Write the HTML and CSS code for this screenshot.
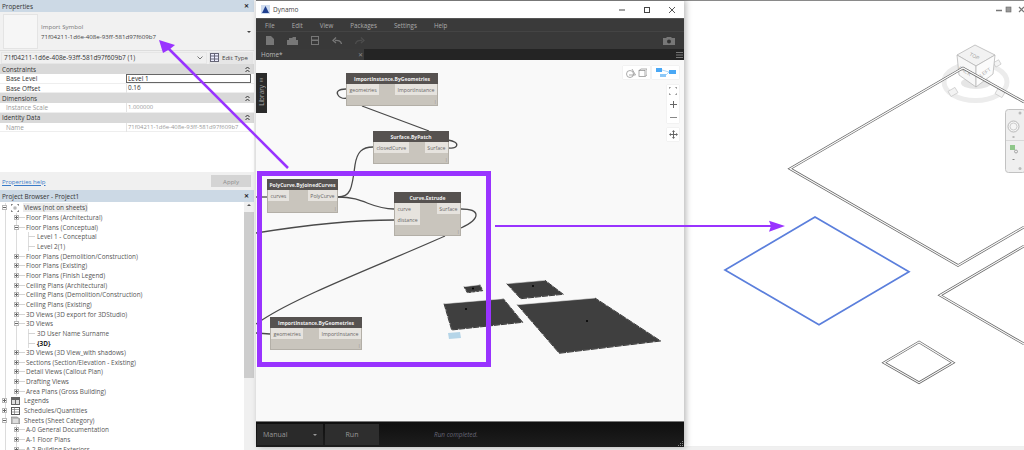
FILE: index.html
```html
<!DOCTYPE html>
<html lang="en">
<head>
<meta charset="utf-8">
<title>Dynamo in Revit</title>
<link rel="stylesheet" href="styles.css">
</head>
<body>
<div class="page">
  <aside class="side">
    <div class="panel-title"><span>Properties</span><span class="x">✕</span></div>
    <div class="selector">
      <div class="thumb"></div>
      <div class="sel-text"><div class="muted">Import Symbol</div><div>71f04211-1d6e-408e-93ff-581d97f609b7</div></div>
      <span class="caret"></span>
    </div>
    <div class="type-row">
      <div class="combo"><span>71f04211-1d6e-408e-93ff-581d97f609b7 (1)</span>
        <svg class="chev" width="6" height="4" viewBox="0 0 6 4"><path d="M0.5 .5 3 3 5.5 .5" fill="none" stroke="#777"/></svg>
      </div>
      <div class="edit-type">
        <svg width="9" height="9" viewBox="0 0 9 9"><rect x=".5" y=".5" width="8" height="8" fill="#eef" stroke="#667"/><path d="M4.500 .5V8.500M.5 3H8.500M.5 6H8.500" stroke="#667" fill="none"/></svg>
        <span>Edit Type</span>
      </div>
    </div>
    <div class="sec"><span>Constraints</span><svg class="sec-ic" width="5" height="7" viewBox="0 0 5 7"><path d="M.5 3 2.500 1 4.500 3M.5 6 2.500 4 4.500 6" fill="none" stroke="#333"/></svg></div>
    <div class="prop"><span class="pn strong">Base Level</span><span class="pv active">Level 1</span></div>
    <div class="prop"><span class="pn strong">Base Offset</span><span class="pv dark">0.16</span></div>
    <div class="sec"><span>Dimensions</span><svg class="sec-ic" width="5" height="7" viewBox="0 0 5 7"><path d="M.5 3 2.500 1 4.500 3M.5 6 2.500 4 4.500 6" fill="none" stroke="#333"/></svg></div>
    <div class="prop"><span class="pn">Instance Scale</span><span class="pv">1.000000</span></div>
    <div class="sec"><span>Identity Data</span><svg class="sec-ic" width="5" height="7" viewBox="0 0 5 7"><path d="M.5 3 2.500 1 4.500 3M.5 6 2.500 4 4.500 6" fill="none" stroke="#333"/></svg></div>
    <div class="prop"><span class="pn">Name</span><span class="pv">71f04211-1d6e-408e-93ff-581d97f609b7</span></div>
    <div class="prop-space"></div>
    <div class="prop-foot"><a class="help">Properties help</a><span class="apply">Apply</span></div>
    <div class="panel-title"><span>Project Browser - Project1</span><span class="x">✕</span></div>
    <div class="browser">
      <div class="tree">
        <div class="row l0 sub"><i class="exp minus"></i><svg class="ti" width="8" height="8" viewBox="0 0 8 8"><path d="M0 2V0H2M6 0H8V2M8 6V8H6M2 8H0V6" fill="none" stroke="#555"/><rect x="3" y="3" width="2" height="2" fill="none" stroke="#777" stroke-width=".6"/></svg><span class="hl">Views (not on sheets)</span></div>
        <div class="row l1"><i class="exp"></i><b></b>Floor Plans (Architectural)</div>
        <div class="row l1"><i class="exp minus"></i><b></b>Floor Plans (Conceptual)</div>
        <div class="row l2"><b></b>Level 1 - Conceptual</div>
        <div class="row l2"><b></b>Level 2(1)</div>
        <div class="row l1"><i class="exp"></i><b></b>Floor Plans (Demolition/Construction)</div>
        <div class="row l1"><i class="exp"></i><b></b>Floor Plans (Existing)</div>
        <div class="row l1"><i class="exp"></i><b></b>Floor Plans (Finish Legend)</div>
        <div class="row l1"><i class="exp"></i><b></b>Ceiling Plans (Architectural)</div>
        <div class="row l1"><i class="exp"></i><b></b>Ceiling Plans (Demolition/Construction)</div>
        <div class="row l1"><i class="exp"></i><b></b>Ceiling Plans (Existing)</div>
        <div class="row l1"><i class="exp"></i><b></b>3D Views (3D export for 3DStudio)</div>
        <div class="row l1"><i class="exp minus"></i><b></b>3D Views</div>
        <div class="row l2"><b></b>3D User Name Surname</div>
        <div class="row l2"><b></b><strong>{3D}</strong></div>
        <div class="row l1"><i class="exp"></i><b></b>3D Views (3D View_with shadows)</div>
        <div class="row l1"><i class="exp"></i><b></b>Sections (Section/Elevation - Existing)</div>
        <div class="row l1"><i class="exp"></i><b></b>Detail Views (Callout Plan)</div>
        <div class="row l1"><i class="exp"></i><b></b>Drafting Views</div>
        <div class="row l1"><i class="exp"></i><b></b>Area Plans (Gross Building)</div>
        <div class="row l0"><i class="exp"></i><svg class="ti" width="9" height="8" viewBox="0 0 9 8"><rect width="9" height="8" fill="#666"/><path d="M1 3H4V7H1ZM5 3H8V7H5Z" fill="#ddd"/></svg>Legends</div>
        <div class="row l0"><i class="exp"></i><svg class="ti" width="9" height="8" viewBox="0 0 9 8"><rect x=".5" y=".5" width="8" height="7" fill="#fff" stroke="#555"/><path d="M.5 2.500H8.500M.5 5H8.500M3.500 .5V7.500" stroke="#777" fill="none" stroke-width=".7"/></svg>Schedules/Quantities</div>
        <div class="row l0"><i class="exp minus"></i><svg class="ti" width="9" height="8" viewBox="0 0 9 8"><path d="M0 1H6L9 3V8H0Z" fill="#bbb" stroke="#777" stroke-width=".6"/><path d="M2 4H7M2 6H7" stroke="#fff"/></svg>Sheets (Sheet Category)</div>
        <div class="row l1 last"><i class="exp"></i><b></b>A-0 General Documentation</div>
        <div class="row l1 last"><i class="exp"></i><b></b>A-1 Floor Plans</div>
        <div class="row l1 last"><i class="exp"></i><b></b>A-2 Building Exteriors</div>
      </div>
      <div class="scroll"><span class="sc-arrow"></span><span class="sc-thumb"></span></div>
    </div>
  </aside>

  <section class="dyn">
    <div class="dyn-title">
      <svg class="dyn-logo" width="9" height="9" viewBox="0 0 9 9"><rect width="9" height="9" fill="#cfdcef"/><path d="M1 8 4.500 1 8 8Z" fill="#1f3f8f"/></svg>
      <span class="dyn-name">Dynamo</span>
      <span class="win-btns">
        <svg width="6" height="6" viewBox="0 0 6 6"><path d="M0 3H6" stroke="#444"/></svg>
        <svg width="6" height="6" viewBox="0 0 6 6"><rect x=".5" y=".5" width="5" height="5" fill="none" stroke="#444"/></svg>
        <svg width="6" height="6" viewBox="0 0 6 6"><path d="M0 0 6 6M6 0 0 6" stroke="#444" stroke-width=".9"/></svg>
      </span>
    </div>
    <nav class="menu"><span>File</span><span>Edit</span><span>View</span><span>Packages</span><span>Settings</span><span>Help</span></nav>
    <div class="tools">
      <svg width="8" height="9" viewBox="0 0 8 9"><path d="M0 0H5L8 3V9H0Z" fill="#777"/></svg>
      <svg width="11" height="8" viewBox="0 0 11 8"><path d="M0 3H11V8H0ZM2 3V1H5L6 0H9V3" fill="#777"/></svg>
      <svg width="8" height="9" viewBox="0 0 8 9"><path d="M0 0H8V9H0ZM1 1V3.500H7V1ZM1 5V8H7V5Z" fill="#777" fill-rule="evenodd"/></svg>
      <svg width="10" height="7" viewBox="0 0 10 7"><path d="M9.500 7C9 4 6 3 3 3.500M4 .5 1 3.500 4 6" fill="none" stroke="#777" stroke-width="1.300"/></svg>
      <svg width="10" height="7" viewBox="0 0 10 7"><path d="M.5 7C1 4 4 3 7 3.500M6 .5 9 3.500 6 6" fill="none" stroke="#4d4d4d" stroke-width="1.300"/></svg>
      <svg class="camera" width="12" height="8" viewBox="0 0 12 8"><path d="M0 1H3L4 0H8L9 1H12V8H0Z" fill="#777"/><circle cx="6" cy="4.500" r="2" fill="#333"/></svg>
    </div>
    <div class="tabs">
      <div class="tab"><span>Home*</span><span class="tab-x">✕</span></div>
      <svg class="burger" width="7" height="6" viewBox="0 0 7 6"><path d="M0 .5H7M0 3H7M0 5.500H7" stroke="#777"/></svg>
    </div>
    <div class="graph">
      <svg class="wires" width="427" height="361" viewBox="256 60 427 361">
        <g fill="none" stroke="#4a4a4a" stroke-width="1.300">
          <path d="M346 89C338 89 336 92 338 95 340 98 344 99 348 98"/>
          <path d="M362 106 429 131"/>
          <path d="M448 140C454 141 458 143 456.500 146 455 149 452 148 448 148"/>
          <path d="M338 197C350 197 352 190 355 165 357 152 362 147 373 147"/>
          <path d="M338 197C365 197 370 209 394 209"/>
          <path d="M256 233C300 226 350 220 394 220"/>
          <path d="M461 209C480 209 482 218 461 228"/>
          <path d="M445 236C380 265 300 295 262 320L256 324"/>
          <path d="M256 197H267"/>
          <path d="M256 333 270 334"/>
        </g>
        <g stroke="#e8e8e8" stroke-width=".6">
          <polygon points="464,286.700 480,284.700 482.700,290.700 467.300,292.700" fill="#3c3c3c"/>
          <polygon points="506.700,283.700 545,280.300 563.300,294.300 520.700,298.700" fill="#3f3f3f"/>
          <polygon points="444,303.700 503.300,298.700 522.700,322.300 451.700,330" fill="#3f3f3f"/>
          <polygon points="517.300,304.700 595,298 660.700,341 559.300,353.300" fill="#3f3f3f"/>
        </g>
        <g fill="none" stroke="#000" stroke-width=".7">
          <path d="M464 286.700 467.300 292.700 482.700 290.700 480 284.700" stroke-dasharray="3 1"/>
          <path d="M506.700 283.700 520.700 298.700 563.300 294.300 545 280.300" stroke-dasharray="6 1"/>
          <path d="M444 303.700 451.700 330 522.700 322.300 503.300 298.700" stroke-dasharray="6 1"/>
          <path d="M517.300 304.700 559.300 353.300 660.700 341 595 298" stroke-dasharray="7 1"/>
        </g>
        <g fill="#000">
          <circle cx="473" cy="288.500" r="1"/>
          <circle cx="533" cy="286" r="1"/>
          <circle cx="466" cy="309" r="1"/>
          <circle cx="587" cy="321" r="1"/>
        </g>
        <polygon points="448,333 460,332 461,338 449,339" fill="#b5d5e8"/>
      </svg>
      <div class="library"><span class="lib-ic">≡</span><span class="lib-txt">Library</span></div>

      <div class="node n-imp1"><div class="nh">ImportInstance.ByGeometries</div><div class="ports"><div class="col"><span>geometries</span></div><div class="col"><span>ImportInstance</span></div></div><i class="lace">⁞</i></div>
      <div class="node n-patch"><div class="nh">Surface.ByPatch</div><div class="ports"><div class="col"><span>closedCurve</span></div><div class="col"><span>Surface</span></div></div><i class="lace">⁞</i></div>
      <div class="node n-poly"><div class="nh">PolyCurve.ByJoinedCurves</div><div class="ports"><div class="col"><span>curves</span></div><div class="col"><span>PolyCurve</span></div></div><i class="lace">⁞</i></div>
      <div class="node n-ext"><div class="nh">Curve.Extrude</div><div class="ports"><div class="col"><span>curve</span><span>distance</span></div><div class="col"><span>Surface</span></div></div><i class="lace">⁞</i></div>
      <div class="node n-imp2"><div class="nh">ImportInstance.ByGeometries</div><div class="ports"><div class="col"><span>geometries</span></div><div class="col"><span>ImportInstance</span></div></div><i class="lace">⁞</i></div>

      <div class="ctl c-view">
        <svg width="21" height="10" viewBox="0 0 21 10"><g fill="none" stroke="#888" stroke-width=".7"><circle cx="4" cy="6" r="3.500"/><path d="M6 1 9.500 7H3"/><rect x="13" y="2.500" width="6" height="6"/><path d="M13 2.500 15 1H21V7L19 8.500"/></g></svg>
      </div>
      <div class="ctl c-graph">
        <svg width="20" height="10" viewBox="0 0 20 10"><rect x="0" y="0" width="6" height="4" fill="#4aa8f5"/><rect x="13" y="2" width="7" height="4" fill="#4aa8f5"/><rect x="4" y="6" width="6" height="3" fill="#8cc8f8"/><path d="M6 2 13 4M10 7 13 4" stroke="#8cc8f8" fill="none" stroke-width=".7"/></svg>
      </div>
      <div class="ctl c-zoom">
        <svg width="8" height="8" viewBox="0 0 8 8"><path d="M0 2V0H2M6 0H8V2M8 6V8H6M2 8H0V6" fill="none" stroke="#777"/></svg>
        <svg width="7" height="7" viewBox="0 0 7 7"><path d="M3.500 0V7M0 3.500H7" stroke="#666"/></svg>
        <svg width="7" height="7" viewBox="0 0 7 7"><path d="M0 3.500H7" stroke="#888"/></svg>
      </div>
      <div class="ctl c-pan">
        <svg width="9" height="9" viewBox="0 0 9 9"><path d="M4.500 0 6 2H3ZM4.500 9 3 7H6ZM0 4.500 2 3V6ZM9 4.500 7 6V3Z" fill="#666"/><path d="M4.500 1V8M1 4.500H8" stroke="#666"/></svg>
      </div>
    </div>
    <div class="runbar">
      <div class="manual"><span>Manual</span><i class="mcaret"></i></div>
      <div class="runbtn">Run</div>
      <span class="status">Run completed.</span>
      <svg class="grip" width="6" height="6" viewBox="0 0 6 6"><path d="M5 1H6V2H5ZM3 3H4V4H3ZM5 3H6V4H5ZM1 5H2V6H1ZM3 5H4V6H3ZM5 5H6V6H5Z" fill="#888"/></svg>
    </div>
  </section>

  <section class="view3d">
    <svg class="scene" width="340" height="447" viewBox="684 0 340 447">
      <g class="ctrls">
        <path d="M996 9.500H1002" stroke="#777" stroke-width="1.500"/>
        <rect x="1006" y="6" width="5" height="5" fill="#999" stroke="#666" stroke-width=".6"/>
        <path d="M1019 6 1024 11M1024 6 1019 11" stroke="#777" stroke-width="1.200"/>
      </g>
      <ellipse cx="975.500" cy="81" rx="31.500" ry="18.500" fill="none" stroke="#ececec" stroke-width="5"/>
      <g fill="#f3f3f3" stroke="#c8c8c8" stroke-width=".7">
        <rect x="949" y="88" width="8" height="6" transform="rotate(-30 953 91)"/>
        <rect x="996" y="89" width="8" height="6" transform="rotate(30 1000 92)"/>
        <rect x="994" y="60" width="6" height="5" transform="rotate(-30 997 62)"/>
      </g>
      <ellipse cx="976" cy="82" rx="15" ry="6" fill="#e6e6e6"/>
      <g stroke="#b8b8b8" stroke-width=".8" stroke-linejoin="round">
        <polygon points="975,44 995,54 976,65 957,54" fill="#f2f2f2"/>
        <polygon points="957,54 976,65 976,86 959,74" fill="#f7f7f7"/>
        <polygon points="976,65 995,54 993,73 976,86" fill="#fbfbfb"/>
      </g>
      <g class="cube-txt">
        <text x="975" y="57" transform="rotate(28 975 54)" text-anchor="middle">TOP</text>
        <text x="965" y="72" transform="rotate(32 965 70)" text-anchor="middle">BACK</text>
        <text x="985" y="73" transform="rotate(-35 985 71)" text-anchor="middle">LEFT</text>
      </g>

      <g class="dbl">
        <path class="o" d="M1024 101 963 67 790 167.700 958 264.500 1024 226"/>
        <path class="i" d="M1024 101 963 67 790 167.700 958 264.500 1024 226"/>
        <path class="o" d="M1024 245 940 294.300 1024 343"/>
        <path class="i" d="M1024 245 940 294.300 1024 343"/>
        <path class="o" d="M919 341 884 361.700 919 381.700 953 361.700Z"/>
        <path class="i" d="M919 341 884 361.700 919 381.700 953 361.700Z"/>
      </g>
      <polygon class="sel" points="815,216 725,269 819,323.700 909,270.700"/>

      <rect x="1005.500" y="108.500" width="20" height="63" rx="3" fill="#efefef" stroke="#c2c2c2"/>
      <circle cx="1013.500" cy="125.500" r="5.500" fill="#f5f5f5" stroke="#aaa" stroke-width=".8"/>
      <circle cx="1013.500" cy="125.500" r="3.500" fill="none" stroke="#bbb" stroke-width=".7"/>
      <path d="M1006 139.500H1024" stroke="#d8d8d8"/>
      <rect x="1010" y="144" width="5" height="5" fill="#8fc78a"/>
      <circle cx="1016" cy="150.500" r="1.500" fill="none" stroke="#777" stroke-width=".6"/>
      <circle cx="1020" cy="112" r="1.500" fill="#bbb"/>
      <circle cx="1020" cy="167.500" r="1.500" fill="#bbb"/>
      <path d="M1012.500 136H1014.500M1012.500 158.500H1014.500" stroke="#888"/>
    </svg>
  </section>

  <svg class="marks" width="1024" height="450" viewBox="0 0 1024 450">
    <rect class="m-box" x="259.500" y="173.500" width="229" height="191"/>
    <path class="m-line" d="M288 168 168 48"/>
    <polygon class="m-head" points="159,40 175,45 170,49 163,53"/>
    <path class="m-line thin" d="M495 226H772"/>
    <polygon class="m-head" points="769,220.700 785,226 769,231.700 771,226"/>
  </svg>
</div>
</body>
</html>
```
FILE: styles.css
```css
* { box-sizing: border-box; }
html, body { margin: 0; padding: 0; }
body { background: #f0f0f0; font-family: "Open Sans", "Liberation Sans", sans-serif; font-size: 6.4px; color: #444; }
.page { position: relative; display: flex; width: 1024px; height: 450px; overflow: hidden; }

/* left column */
.side { width: 254px; height: 450px; flex: none; display: flex; flex-direction: column; background: #fff; margin-right: 2px; }
.panel-title { flex: none; height: 12px; display: flex; align-items: center; justify-content: space-between; padding: 0 5px 0 2px; background: #ccd9e5; color: #333; }
.x { font-size: 6px; font-weight: 700; color: #222; }
.selector { flex: none; height: 39px; display: flex; align-items: center; background: #f1f1f1; border-bottom: 1px solid #ddd; padding: 1px 3px 1px 3px; position: relative; }
.thumb { width: 35px; height: 35px; background: #f6f6f6; border: 1px solid #e4e4e4; margin-right: 3px; flex: none; }
.sel-text { display: flex; flex-direction: column; gap: 2.500px; color: #444; line-height: 7px; font-size: 6.150px; padding-top: 1px; }
.muted { color: #777; }
.caret { margin-left: auto; width: 0; height: 0; border: 2px solid transparent; border-top: 2px solid #444; margin-top: 4px; }
.type-row { flex: none; height: 13px; display: flex; align-items: center; background: #f0f0f0; padding: 0 1px; gap: 2px; }
.combo { width: 206px; height: 12px; display: flex; align-items: center; justify-content: space-between; padding: 0 2px; background: #f0f0f0; color: #333; border: 1px solid #e6e6e6; font-size: 6.500px; }
.chev { margin-right: 1px; }
.edit-type { flex: 1; height: 12px; display: flex; align-items: center; gap: 3px; padding-left: 1px; background: #e6e6e6; color: #444; font-size: 6.100px; }
.sec { flex: none; height: 10px; display: flex; align-items: center; justify-content: space-between; padding: 0 4px 0 2px; background: #d9d9d9; color: #333; }
.prop { flex: none; height: 9.500px; display: grid; grid-template-columns: 126px 1fr; align-items: center; background: #fff; border-bottom: 1px solid #eee; }
.pn { padding-left: 6px; color: #999; }
.pn.strong { color: #333; }
.pv { height: 100%; padding-left: 1px; color: #999; line-height: 8px; border-left: 1px solid #e4e4e4; font-size: 5.900px; white-space: nowrap; }
.pv.dark { color: #333; font-size: 6.400px; }
.pv.active { color: #222; border: 1px solid #666; margin-right: 3px; line-height: 7px; font-size: 6.400px; }
.prop-space { flex: 1; background: #fff; }
.prop-foot { flex: none; height: 18px; display: flex; align-items: center; justify-content: space-between; padding: 0 3px 0 2px; background: #f0f0f0; font-size: 6.100px; }
.help { color: #3a7bc8; text-decoration: underline; }
.apply { width: 40px; height: 12px; display: flex; align-items: center; justify-content: center; background: #d4d4d4; color: #8d8d8d; }

.browser { flex: none; height: 248px; display: flex; background: #fff; overflow: hidden; }
.tree { flex: 1; padding-top: 1px; }
.row { height: 9.660px; display: flex; align-items: center; white-space: nowrap; color: #555; position: relative; }
.row.l0 { padding-left: 2px; background: linear-gradient(#dcdcdc, #dcdcdc) 5px 0 / 1px 100% no-repeat; }
.row.l1 { padding-left: 14px; background: linear-gradient(#dcdcdc, #dcdcdc) 5px 0 / 1px 100% no-repeat, linear-gradient(#dcdcdc, #dcdcdc) 16px 0 / 1px 100% no-repeat; }
.row.l2 { padding-left: 28px; background: linear-gradient(#dcdcdc, #dcdcdc) 5px 0 / 1px 100% no-repeat, linear-gradient(#dcdcdc, #dcdcdc) 16px 0 / 1px 100% no-repeat, linear-gradient(#dcdcdc, #dcdcdc) 28px 0 / 1px 100% no-repeat; }
.row b { display: block; width: 6px; height: 1px; background: #d4d4d4; margin: 0 1px 0 0; flex: none; }
.row.l2 b { width: 7px; margin: 0 2px 0 0; }
.row.l2 strong { color: #222; font-weight: 700; }
.exp { display: block; flex: none; width: 5px; height: 5px; border: 1px solid #b8b8b8; background: linear-gradient(#666, #666) center / 3px 1px no-repeat, linear-gradient(#666, #666) center / 1px 3px no-repeat, #fff; }
.exp.minus { background: linear-gradient(#666, #666) center / 3px 1px no-repeat, #fff; }
.ti { flex: none; margin: 0 4px 0 4px; }
.hl { background: #ececec; padding: 0 1px; color: #444; }
.scroll { width: 10px; flex: none; background: #f0f0f0; display: flex; flex-direction: column; align-items: center; }
.sc-arrow { width: 0; height: 0; margin: 2px 0 6px; border: 2.500px solid transparent; border-bottom: 2.500px solid #555; border-top-width: 0; }
.sc-thumb { width: 10px; height: 166px; background: #cdcdcd; }

/* Dynamo window */
.dyn { width: 428px; height: 447px; flex: none; display: flex; flex-direction: column; background: #fff; border-top: 1px solid #777; box-shadow: 2px 0 6px rgba(0, 0, 0, .28); z-index: 1; }
.dyn-title { flex: none; height: 17px; display: flex; align-items: center; padding: 0 9px 0 5px; background: #fff; }
.dyn-logo { margin-right: 3px; }
.dyn-name { font-size: 6.500px; color: #444; }
.win-btns { margin-left: auto; display: flex; gap: 19px; }
.menu { flex: none; height: 14px; display: flex; align-items: center; background: #3a3a3a; color: #aaa; padding-left: 9px; border-top: 1px solid #555; font-size: 6.200px; border-bottom: 1px solid #444; }
.menu span { margin-right: 17px; }
.tools { flex: none; height: 17px; display: flex; align-items: center; gap: 13px; background: #393939; padding-left: 10px; }
.camera { margin-left: auto; margin-right: 9px; }
.tabs { flex: none; height: 11px; display: flex; align-items: center; justify-content: space-between; background: #242424; padding-right: 1px; }
.tab { width: 108px; height: 11px; display: flex; align-items: center; justify-content: space-between; padding: 0 1px 0 5px; background: #3a3a3a; color: #bbb; }
.tab-x { font-size: 6px; color: #888; }
.graph { flex: none; height: 361px; position: relative; background: #f9f9f9; overflow: hidden; }
.wires { position: absolute; left: 0; top: 0; }
.library { position: absolute; left: 0; top: 13px; width: 11px; height: 40px; background: #2b2b2b; display: flex; flex-direction: column; align-items: center; color: #aaa; }
.lib-ic { font-size: 6px; line-height: 10px; margin-top: 2px; }
.lib-txt { writing-mode: vertical-rl; transform: rotate(180deg); line-height: 11px; }

.node { position: absolute; display: flex; flex-direction: column; background: #c9c5bd; border: 1px solid #b3afa7; color: #666; }
.nh { flex: none; height: 11px; margin: -1px -1px 0; display: flex; align-items: center; justify-content: center; background: #565250; color: #eee; font-weight: 700; font-size: 5.050px; white-space: nowrap; }
.ports { display: flex; justify-content: space-between; }
.col { display: flex; flex-direction: column; }
.col span { height: 11px; display: flex; align-items: center; padding: 0 2.500px; background: #e6e3de; white-space: nowrap; font-size: 5.200px; }
.lace { position: absolute; right: 1px; bottom: 0; font-style: normal; font-size: 5px; line-height: 6px; color: #777; }
.n-imp1 { left: 90px; top: 13px; width: 92px; height: 33px; }
.n-patch { left: 117px; top: 71px; width: 76px; height: 33px; }
.n-poly { left: 11px; top: 119px; width: 71px; height: 34px; }
.n-ext { left: 138px; top: 132px; width: 67px; height: 44px; }
.n-imp2 { left: 14px; top: 257px; width: 92px; height: 33px; }

.ctl { position: absolute; display: flex; align-items: center; justify-content: center; background: #fff; box-shadow: 0 0 1px rgba(0, 0, 0, .18); }
.c-view { left: 367px; top: 6px; width: 27px; height: 13px; }
.c-graph { left: 396px; top: 6px; width: 27px; height: 13px; }
.c-zoom { left: 411px; top: 25px; width: 12px; height: 38px; flex-direction: column; gap: 6px; }
.c-pan { left: 411px; top: 68px; width: 12px; height: 13px; }

.runbar { flex: none; height: 26px; display: flex; align-items: center; background: linear-gradient(#0f0f0f, #1d1d1d); border-top: 1px solid #777; padding-left: 1px; position: relative; color: #999; }
.manual { width: 66px; height: 21px; display: flex; align-items: center; justify-content: space-between; padding: 0 6px; background: #2a2a2a; font-size: 7px; }
.mcaret { width: 0; height: 0; border: 2px solid transparent; border-top: 2px solid #999; margin-top: 2px; }
.runbtn { width: 54px; height: 21px; margin-left: 2px; display: flex; align-items: center; justify-content: center; background: #2e2e2e; font-size: 7px; }
.status { margin-left: 55px; font-style: italic; color: #667; }
.grip { position: absolute; right: 1px; bottom: 1px; }

/* 3D view */
.view3d { flex: 1; height: 447px; background: #fff; border-top: 1px solid #8a8a8a; border-bottom: 1px solid #eee; }
.scene { display: block; }
.cube-txt text { font-family: "Liberation Sans", sans-serif; font-size: 5px; fill: #a8a8a8; }
.dbl path { fill: none; stroke-linejoin: miter; }
.dbl .o { stroke: #6a6a6a; stroke-width: 2.600; }
.dbl .i { stroke: #fff; stroke-width: 1.100; }
.sel { fill: none; stroke: #5b7fdc; stroke-width: 1.700; }

/* annotation layer */
.marks { position: absolute; left: 0; top: 0; z-index: 2; pointer-events: none; }
.m-box { fill: none; stroke: #9933ff; stroke-width: 5; }
.m-line { fill: none; stroke: #9933ff; stroke-width: 2.500; }
.m-line.thin { stroke-width: 2; }
.m-head { fill: #9933ff; }
```
